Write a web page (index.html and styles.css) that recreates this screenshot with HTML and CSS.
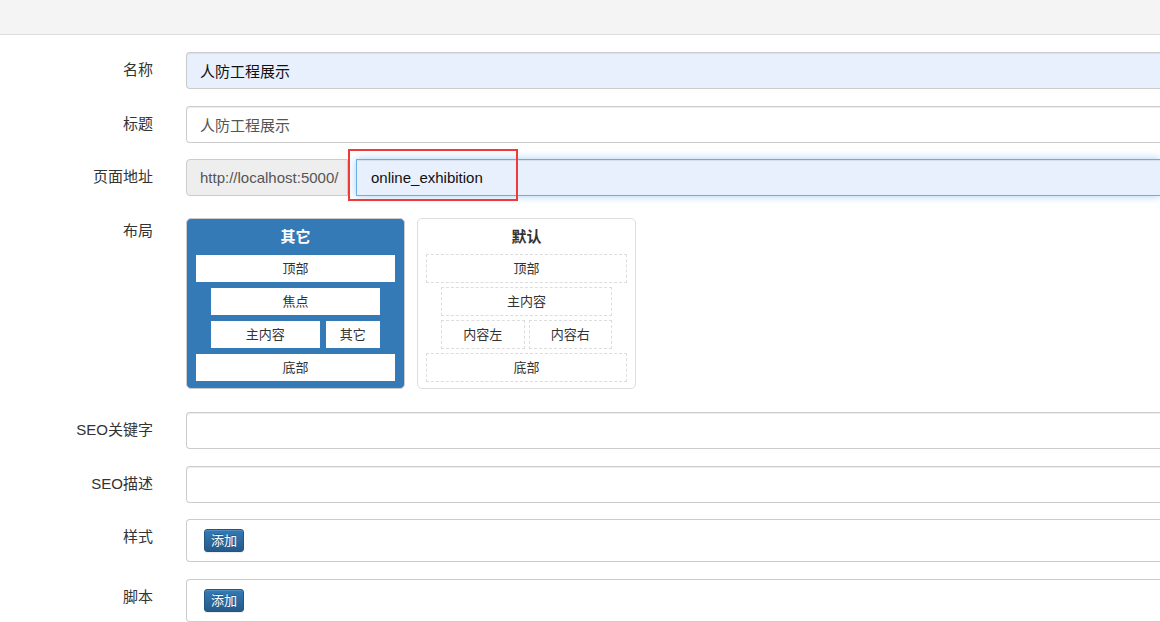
FILE: index.html
```html
<!DOCTYPE html>
<html lang="zh-CN">
<head>
    <meta charset="UTF-8">
    <meta name="viewport" content="width=device-width, initial-scale=1.0">
    <title>页面设置</title>
    <link rel="stylesheet" href="styles.css">
</head>
<body>
    <div class="topbar"></div>

    <form class="page-form">
        <div class="form-row">
            <label class="row-label">名称</label>
            <div class="row-field">
                <input type="text" class="field field-filled" value="人防工程展示">
            </div>
        </div>

        <div class="form-row">
            <label class="row-label">标题</label>
            <div class="row-field">
                <input type="text" class="field" value="人防工程展示">
            </div>
        </div>

        <div class="form-row">
            <label class="row-label">页面地址</label>
            <div class="row-field url-group">
                <span class="url-prefix">http://localhost:5000/</span>
                <input type="text" class="field field-focus" value="online_exhibition">
                <span class="mark"></span>
            </div>
        </div>

        <div class="form-row">
            <label class="row-label">布局</label>
            <div class="row-field layouts">
                <div class="layout layout-active">
                    <div class="layout-title">其它</div>
                    <div class="slot">顶部</div>
                    <div class="slot slot-inset">焦点</div>
                    <div class="slot-row slot-inset">
                        <div class="slot slot-wide">主内容</div>
                        <div class="slot">其它</div>
                    </div>
                    <div class="slot">底部</div>
                </div>
                <div class="layout">
                    <div class="layout-title">默认</div>
                    <div class="slot">顶部</div>
                    <div class="slot slot-inset">主内容</div>
                    <div class="slot-row slot-inset">
                        <div class="slot">内容左</div>
                        <div class="slot">内容右</div>
                    </div>
                    <div class="slot">底部</div>
                </div>
            </div>
        </div>

        <div class="form-row">
            <label class="row-label">SEO关键字</label>
            <div class="row-field">
                <input type="text" class="field">
            </div>
        </div>

        <div class="form-row">
            <label class="row-label">SEO描述</label>
            <div class="row-field">
                <input type="text" class="field">
            </div>
        </div>

        <div class="form-row">
            <label class="row-label">样式</label>
            <div class="row-field">
                <div class="field-box"><button type="button" class="btn-add">添加</button></div>
            </div>
        </div>

        <div class="form-row">
            <label class="row-label">脚本</label>
            <div class="row-field">
                <div class="field-box"><button type="button" class="btn-add">添加</button></div>
            </div>
        </div>
    </form>
</body>
</html>
```

FILE: styles.css
```css
html, body {
    overflow: hidden;
}

body {
    margin: 0;
    padding: 0;
    background-color: #fff;
    color: #333;
    font-family: "Liberation Sans", "Noto Sans CJK SC", sans-serif;
    font-size: 15px;
}

.topbar {
    height: 34px;
    background-color: #f4f4f4;
    border-bottom: 1px solid #ddd;
}

.page-form {
    padding-top: 17px;
}

.form-row {
    display: grid;
    grid-template-columns: 153px 1fr;
    column-gap: 33px;
    margin-bottom: 16.5px;
}

.row-label {
    text-align: right;
    padding-top: 8px;
    line-height: 20px;
    color: #333;
}

.row-field {
    min-width: 0;
}

.field {
    display: block;
    width: 100%;
    height: 37px;
    box-sizing: border-box;
    padding: 0 13px;
    border: 1px solid #ccc;
    border-right: none;
    border-radius: 4px 0 0 4px;
    background-color: #fff;
    box-shadow: inset 0 1px 1px rgba(0,0,0,0.075);
    font-family: inherit;
    font-size: 15px;
    color: #555;
    outline: none;
}

.field-filled {
    background-color: #e8f0fe;
    color: #111;
}

/* page address: prefix + focused input */
.url-group {
    position: relative;
    display: flex;
}

.url-prefix {
    flex: none;
    width: 162px;
    height: 37px;
    box-sizing: border-box;
    padding: 0 13px;
    line-height: 35px;
    background-color: #eee;
    border: 1px solid #ccc;
    border-radius: 4px 0 0 4px;
    color: #555;
    white-space: nowrap;
}

.field-focus {
    flex: 1;
    width: auto;
    min-width: 0;
    margin-left: 8px;
    padding-left: 14px;
    border-color: #66afe9;
    border-radius: 0;
    background-color: #e8f0fe;
    color: #111;
    box-shadow: inset 0 1px 1px rgba(0,0,0,0.075), 0 0 8px rgba(102,175,233,0.6);
}

.mark {
    position: absolute;
    left: 162px;
    top: -10px;
    width: 170px;
    height: 52px;
    box-sizing: border-box;
    border: 2px solid #f03a3a;
    pointer-events: none;
}

/* layout picker */
.layouts {
    display: flex;
    gap: 12px;
    padding: 5.5px 0 6.5px;
}

.layout {
    width: 219px;
    box-sizing: border-box;
    padding: 0 8px 6px;
    border: 1px solid #ddd;
    border-radius: 5px;
    background-color: #fff;
}

.layout-title {
    height: 35px;
    line-height: 35px;
    text-align: center;
    font-weight: bold;
    color: #333;
}

.slot {
    height: 29px;
    box-sizing: border-box;
    margin-bottom: 4px;
    border: 1px dashed #ddd;
    line-height: 27px;
    text-align: center;
    font-size: 13px;
    color: #333;
}

.layout .slot:last-child {
    margin-bottom: 0;
}

.slot-inset {
    margin-left: 15px;
    margin-right: 15px;
}

.slot-row {
    display: flex;
    gap: 4px;
    margin-bottom: 4px;
}

.slot-row .slot {
    flex: 1;
    margin-bottom: 0;
}

.slot-row .slot-wide {
    flex: 2;
}

.layout-active {
    background-color: #337ab7;
    border-color: #ccc;
}

.layout-active .layout-title {
    color: #fff;
}

.layout-active .slot {
    background-color: #fff;
    background-clip: padding-box;
    border-style: solid;
    border-color: #337ab7;
}

/* boxes holding the add buttons */
.field-box {
    height: 43px;
    box-sizing: border-box;
    padding: 9px 17px;
    border: 1px solid #ccc;
    border-right: none;
    border-radius: 4px 0 0 4px;
}

.btn-add {
    display: block;
    height: 23px;
    padding: 0 6px;
    border: 1px solid #245580;
    border-radius: 3px;
    background-image: linear-gradient(to bottom, #337ab7 0, #265a88 100%);
    color: #fff;
    font-family: inherit;
    font-size: 13px;
    line-height: 21px;
    text-shadow: 0 -1px 0 rgba(0,0,0,0.2);
    box-shadow: inset 0 1px 0 rgba(255,255,255,0.15), 0 1px 1px rgba(0,0,0,0.075);
    cursor: pointer;
}
```
